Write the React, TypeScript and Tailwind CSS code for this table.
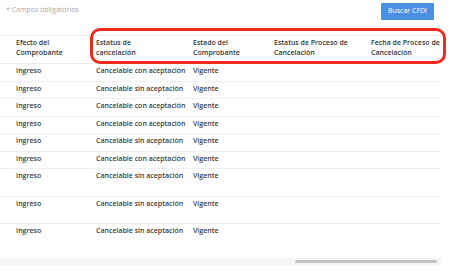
import React from "react";

const rows: { estatus: string; h: string }[] = [
  { estatus: "Cancelable con aceptación", h: "h-[17px]" },
  { estatus: "Cancelable sin aceptación", h: "h-[17px]" },
  { estatus: "Cancelable con aceptación", h: "h-[18px]" },
  { estatus: "Cancelable con aceptación", h: "h-[17px]" },
  { estatus: "Cancelable sin aceptación", h: "h-[18px]" },
  { estatus: "Cancelable con aceptación", h: "h-[17px]" },
  { estatus: "Cancelable sin aceptación", h: "h-[28px]" },
  { estatus: "Cancelable sin aceptación", h: "h-[27px]" },
  { estatus: "Cancelable sin aceptación", h: "h-[27px]" },
];

export default function App() {
  return (
    <div
      className="relative w-[450px] h-[273px] bg-white overflow-hidden"
      style={{ fontFamily: '"Open Sans", "Liberation Sans", sans-serif' }}
    >
      <div className="flex justify-between items-start h-[35px]">
        <div className="pl-[6px] pt-[5px] text-[7px] leading-[10px] text-[#a8a8a8]">
          * Campos obligatorios
        </div>
        <div className="mt-[3px] mr-[16px] w-[53px] h-[17px] bg-[#4a90e2] text-white text-[7px] flex items-center justify-center rounded-[1px]">
          Buscar CFDI
        </div>
      </div>

      <div className="w-[441px] text-[7px] leading-[10px] font-semibold text-[#3c3c3c]">
        <div className="grid grid-cols-[96px_97px_81px_97px_70px] border-t border-b border-[#ececec] pt-[2px] pb-[5px] text-[#333333]">
          <div className="pl-[16px]">Efecto del<br />Comprobante</div>
          <div>Estatus de<br />cancelación</div>
          <div>Estado del<br />Comprobante</div>
          <div>Estatus de Proceso de<br />Cancelación</div>
          <div>Fecha de Proceso de<br />Cancelación</div>
        </div>
        {rows.map((r, i) => (
          <div
            key={i}
            className={`grid grid-cols-[96px_97px_81px_97px_70px] ${r.h} ${i > 0 ? "pt-[2px] border-t border-[#efefef]" : "pt-[2px]"}`}
          >
            <div className="pl-[16px] whitespace-nowrap">Ingreso</div>
            <div className="whitespace-nowrap">{r.estatus}</div>
            <div className="whitespace-nowrap">Vigente</div>
            <div></div>
            <div></div>
          </div>
        ))}
      </div>

      <div className="absolute left-0 top-[258px] w-[441px] h-[7px] bg-[#f5f5f5]">
        <div className="absolute left-[295px] top-[2px] w-[142px] h-[3px] rounded-full bg-[#c2c2c2]"></div>
      </div>

      <div className="absolute left-[90px] top-[28px] w-[356px] h-[36px] border-[3px] border-[#f02a1e] rounded-[10px]"></div>
    </div>
  );
}
